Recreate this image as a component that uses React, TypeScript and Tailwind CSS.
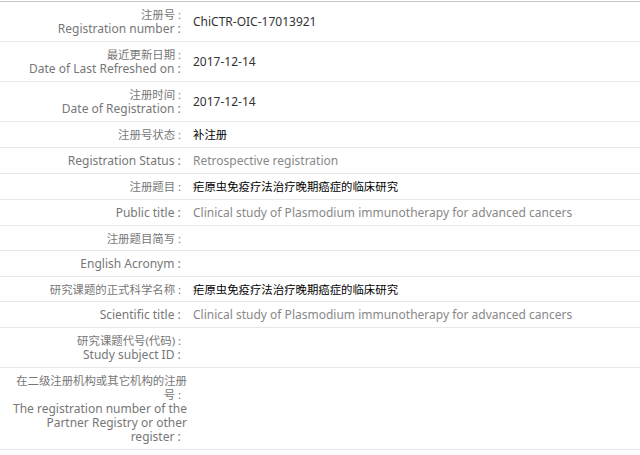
import React from "react";

type Row = {
  zh?: string;
  en?: string;
  value?: string;
  valueKind?: "code" | "zh" | "en";
  tight?: boolean;
};

const rows: Row[] = [
  { zh: "注册号", en: "Registration number", value: "ChiCTR-OIC-17013921", valueKind: "code" },
  { zh: "最近更新日期", en: "Date of Last Refreshed on", value: "2017-12-14", valueKind: "code" },
  { zh: "注册时间", en: "Date of Registration", value: "2017-12-14", valueKind: "code" },
  { zh: "注册号状态", value: "补注册", valueKind: "zh" },
  { en: "Registration Status", value: "Retrospective registration", valueKind: "en" },
  { zh: "注册题目", value: "疟原虫免疫疗法治疗晚期癌症的临床研究", valueKind: "zh" },
  { en: "Public title", value: "Clinical study of Plasmodium immunotherapy for advanced cancers", valueKind: "en" },
  { zh: "注册题目简写", tight: true },
  { en: "English Acronym" },
  { zh: "研究课题的正式科学名称", value: "疟原虫免疫疗法治疗晚期癌症的临床研究", valueKind: "zh", tight: true },
  { en: "Scientific title", value: "Clinical study of Plasmodium immunotherapy for advanced cancers", valueKind: "en" },
  { zh: "研究课题代号(代码)", en: "Study subject ID" },
  {
    zh: "在二级注册机构或其它机构的注册号",
    en: "The registration number of the Partner Registry or other register",
  },
];

const suffix = "\u00A0:\u00A0\u00A0";

function Label({ zh, en }: { zh?: string; en?: string }) {
  return (
    <div className="w-[187px] shrink-0 pl-[12px] text-right text-[#777]">
      {zh && <div className="text-[11.4px]">{zh + suffix}</div>}
      {en && <div>{en + suffix}</div>}
    </div>
  );
}

export default function App() {
  return (
    <div
      className="w-[640px] h-[455px] overflow-hidden bg-white pt-[1px] text-[12px] leading-[14px]"
      style={{ fontFamily: '"Noto Sans", "Noto Sans CJK SC", sans-serif' }}
    >
      <div className="border-t border-[#c8c8c8]">
        {rows.map((r, i) => (
          <div
            key={i}
            className={`flex items-center border-b border-[#e8e8e8] pt-[6px] ${r.tight ? "pb-[4px]" : "pb-[5px]"}`}
          >
            <Label zh={r.zh} en={r.en} />
            <div
              className={`pl-[6px] whitespace-nowrap ${
                r.valueKind === "zh"
                  ? "text-[11.4px] text-black"
                  : r.valueKind === "en"
                  ? "text-[#888]"
                  : "text-[#333]"
              }`}
            >
              {r.value}
            </div>
          </div>
        ))}
      </div>
    </div>
  );
}
